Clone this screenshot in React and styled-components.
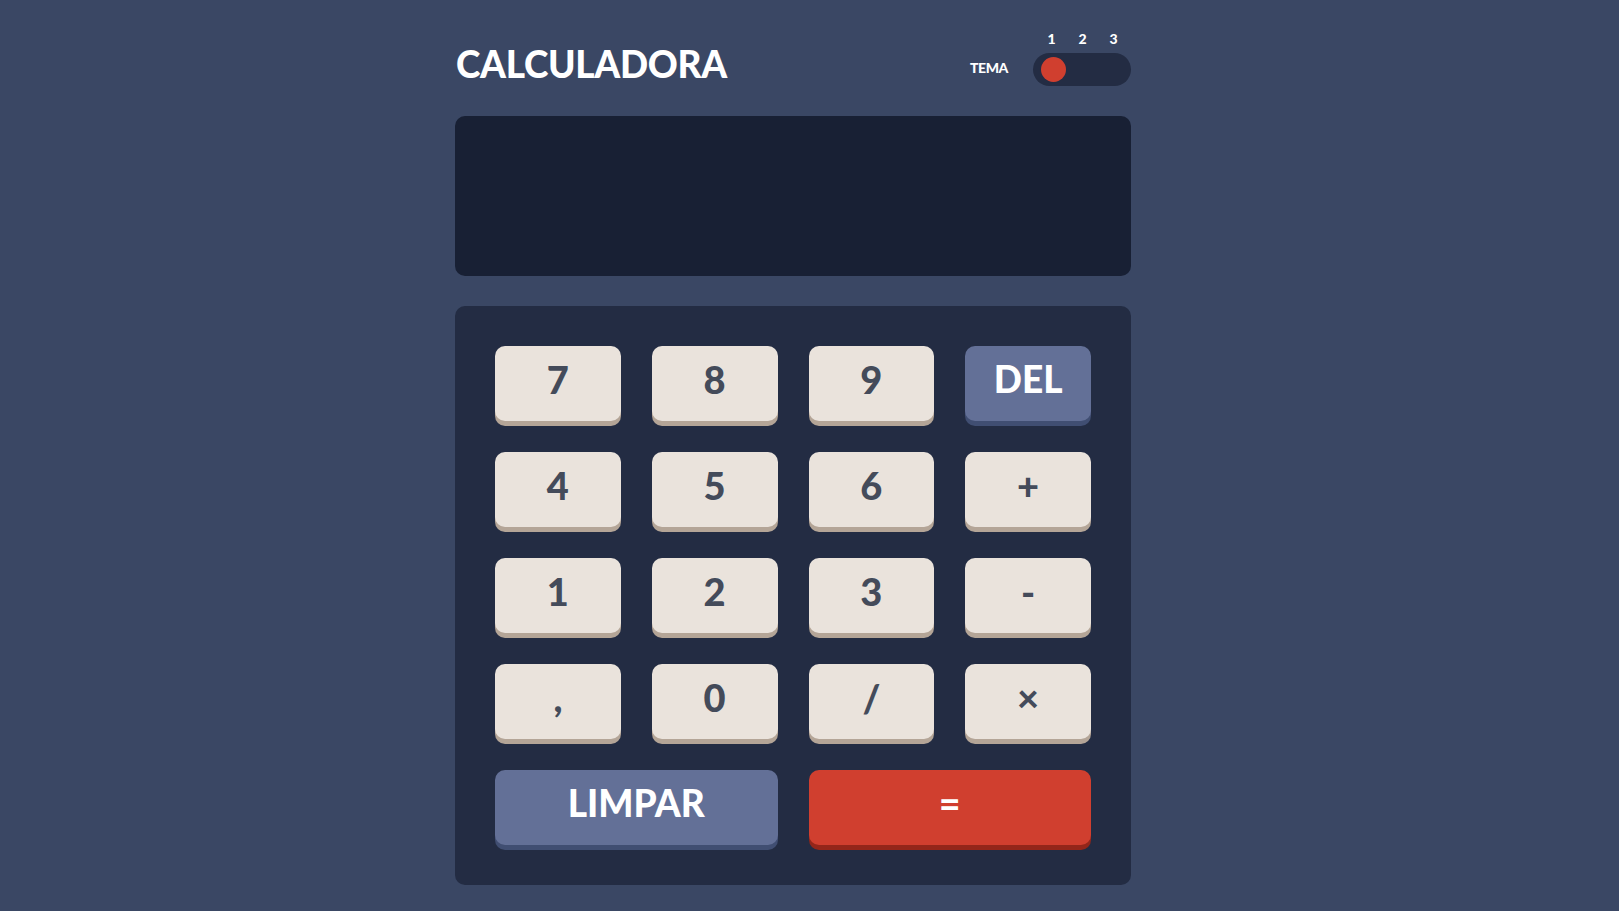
import React from 'react';
import styled, { createGlobalStyle } from 'styled-components';

const colors = {
  page: '#3a4764',
  panel: '#232c43',
  screen: '#182034',
  key: '#eae3dc',
  keyShade: '#b4a597',
  keyText: '#444b5a',
  blue: '#637097',
  blueShade: '#404e72',
  red: '#d03f2f',
  redShade: '#93261a',
  white: '#ffffff'
};

const GlobalStyle = createGlobalStyle`
  body {
    margin: 0;
    background: ${colors.page};
    font-family: Lato, "Open Sans", "Liberation Sans", sans-serif;
  }
`;

const Page = styled.main`
  display: flex;
  justify-content: center;
  padding: 32px 33px 25px 0;
`;

const Calculator = styled.div`
  width: 676px;
  display: flex;
  flex-direction: column;
`;

const Header = styled.header`
  display: flex;
  justify-content: space-between;
  align-items: flex-end;
  color: ${colors.white};
`;

const Title = styled.h1`
  margin: 0 0 4px 1px;
  font-size: 37px;
  line-height: 1;
  font-weight: 900;
  letter-spacing: -0.3px;
`;

const ThemeControl = styled.div`
  display: flex;
  align-items: flex-end;
  gap: 25px;
`;

const ThemeLabel = styled.span`
  font-size: 14px;
  line-height: 1;
  font-weight: 900;
  letter-spacing: -0.4px;
  margin-bottom: 11px;
`;

const ToggleGroup = styled.div`
  display: flex;
  flex-direction: column;
  gap: 7px;
`;

const ToggleNumbers = styled.div`
  display: grid;
  grid-template-columns: repeat(3, 31px);
  padding-left: 3px;
  font-size: 14px;
  line-height: 1;
  font-weight: 900;
  text-align: center;
`;

const Toggle = styled.div`
  width: 98px;
  height: 33px;
  box-sizing: border-box;
  padding: 4px 8px;
  border-radius: 17px;
  background: ${colors.panel};
  display: flex;
  align-items: center;
`;

const Knob = styled.span`
  width: 25px;
  height: 25px;
  border-radius: 50%;
  background: ${colors.red};
`;

const Screen = styled.div`
  margin-top: 30px;
  height: 160px;
  border-radius: 10px;
  background: ${colors.screen};
`;

const Keypad = styled.div`
  margin-top: 30px;
  padding: 40px;
  border-radius: 10px;
  background: ${colors.panel};
  display: grid;
  grid-template-columns: repeat(4, 1fr);
  grid-auto-rows: 75px;
  gap: 31px 31px;
`;

const variants = {
  plain: { bg: colors.key, shade: colors.keyShade, text: colors.keyText },
  blue: { bg: colors.blue, shade: colors.blueShade, text: colors.white },
  red: { bg: colors.red, shade: colors.redShade, text: colors.white }
};

const Key = styled.button`
  grid-column: span ${(p) => (p.$wide ? 2 : 1)};
  border: none;
  border-radius: 10px;
  background: ${(p) => variants[p.$variant].bg};
  box-shadow: 0 5px 0 ${(p) => variants[p.$variant].shade};
  color: ${(p) => variants[p.$variant].text};
  font-family: inherit;
  font-size: ${(p) => (p.$variant === 'plain' ? '38px' : '37px')};
  font-weight: 900;
  line-height: 1;
  display: flex;
  align-items: center;
  justify-content: center;
  padding: 0 0 10px;
  cursor: pointer;
`;

const keys = [
  { label: '7' }, { label: '8' }, { label: '9' }, { label: 'DEL', variant: 'blue' },
  { label: '4' }, { label: '5' }, { label: '6' }, { label: '+' },
  { label: '1' }, { label: '2' }, { label: '3' }, { label: '-' },
  { label: ',' }, { label: '0' }, { label: '/' }, { label: '×' },
  { label: 'LIMPAR', variant: 'blue', wide: true },
  { label: '=', variant: 'red', wide: true }
];

export default function App() {
  return (
    <Page>
      <GlobalStyle />
      <Calculator>
        <Header>
          <Title>CALCULADORA</Title>
          <ThemeControl>
            <ThemeLabel>TEMA</ThemeLabel>
            <ToggleGroup>
              <ToggleNumbers>
                <span>1</span>
                <span>2</span>
                <span>3</span>
              </ToggleNumbers>
              <Toggle>
                <Knob />
              </Toggle>
            </ToggleGroup>
          </ThemeControl>
        </Header>
        <Screen />
        <Keypad>
          {keys.map((k) => (
            <Key key={k.label} $variant={k.variant || 'plain'} $wide={k.wide}>
              {k.label}
            </Key>
          ))}
        </Keypad>
      </Calculator>
    </Page>
  );
}
